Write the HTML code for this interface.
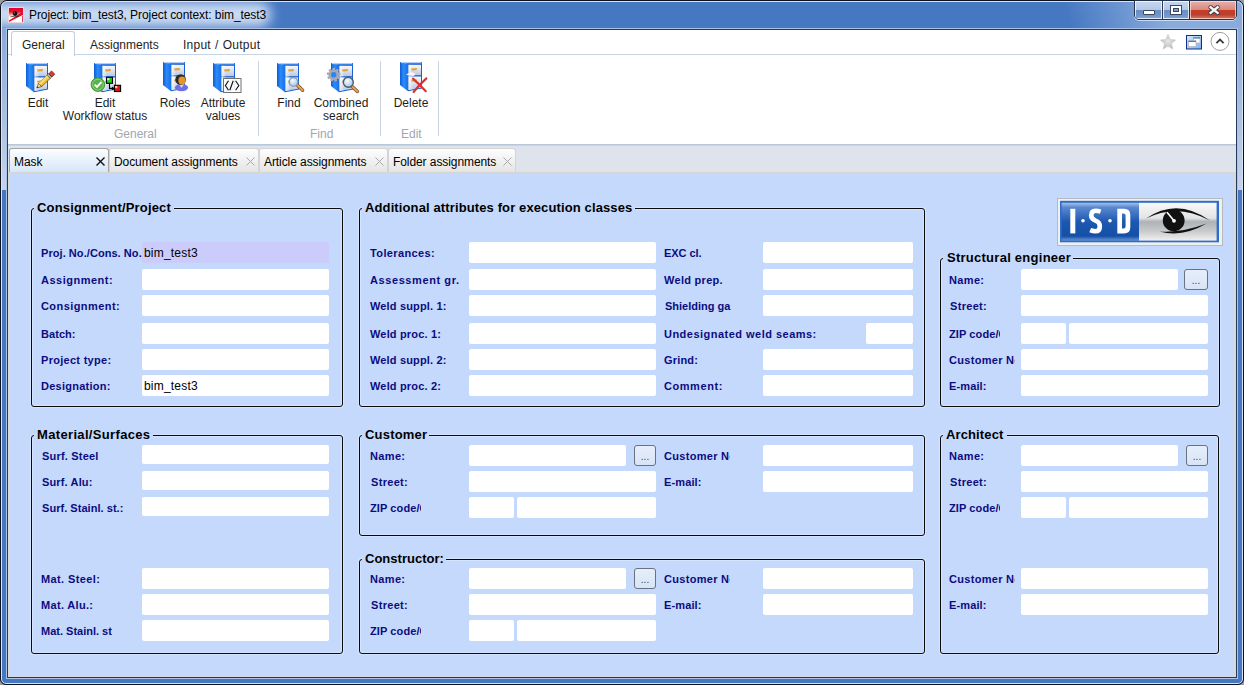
<!DOCTYPE html><html><head><meta charset="utf-8"><style>
html,body{margin:0;padding:0;width:1244px;height:685px;overflow:hidden;background:#9a9a9a;font-family:"Liberation Sans",sans-serif;position:relative}
.abs{position:absolute}
.lb{position:absolute;white-space:nowrap;color:#0c0c80;font-weight:bold;font-size:11px;line-height:11px;height:12px}
.fd{position:absolute;background:#fff;border-radius:2px;font-size:12px;color:#000;text-indent:2px;white-space:nowrap;letter-spacing:0.2px;overflow:hidden}
.bt{position:absolute;border:1px solid #6a7282;border-radius:3px;background:linear-gradient(#e6eefa,#d8e4f6);font-size:10px;color:#3a4250;text-align:center}
.gb{position:absolute;border:1px solid #0a0a0a;border-radius:3px;box-shadow:0 0 0 1px #d4e4fe, inset 0 0 0 1px #d4e4fe}
.gt{position:absolute;height:17px;line-height:17px;font-size:13px;font-weight:bold;color:#000;background:#c5d9fc;white-space:nowrap;padding-left:3px}
.rt{position:absolute;font-size:12px;color:#1e1e1e;white-space:nowrap;text-align:center;line-height:13px}
.gl{position:absolute;font-size:12px;color:#a2a6ae;white-space:nowrap;line-height:14px}
.sep{position:absolute;width:1px;top:61px;height:75px;background:#c8d4e4}
.dt{position:absolute;top:148px;height:24px;border:1px solid #d4d4d4;border-bottom:none;border-radius:3px 3px 0 0;background:linear-gradient(#fefefe,#e4e4e4);font-size:12px;color:#000;box-sizing:border-box}
.dt span{position:absolute;left:4px;top:6px;line-height:14px;white-space:nowrap;letter-spacing:-0.08px}
</style></head><body>

<div class="abs" style="left:0;top:0;width:1242px;height:683px;border:1px solid #0c121c;border-radius:7px 7px 6px 6px;background:#4678c2;overflow:hidden">
<div class="abs" style="left:-14px;top:1px;width:284px;height:25px;background:rgba(226,236,252,0.85);filter:blur(6px);border-radius:12px"></div>
<div class="abs" style="left:960px;top:0px;width:282px;height:28px;background:linear-gradient(75deg,rgba(140,174,222,0) 38%,rgba(140,174,222,0.95) 72%);"></div>
<div class="abs" style="left:1px;top:27px;width:5px;height:162px;background:linear-gradient(#8aa8d8,#c6d4ea)"></div>
<div class="abs" style="left:1236px;top:19px;width:5px;height:170px;background:linear-gradient(#8aa8d8,#c6d4ea)"></div>
<div class="abs" style="left:0;top:0;right:0;bottom:0;border:1px solid #d8e4f4;border-radius:6px 6px 5px 5px"></div>
</div>
<svg class="abs" style="left:8px;top:7px" width="16" height="16" viewBox="0 0 16 16">
<defs><linearGradient id="ai" x1="0" y1="0" x2="0" y2="1"><stop offset="0" stop-color="#e0002a"/><stop offset="0.28" stop-color="#e41030"/><stop offset="0.62" stop-color="#ffffff"/><stop offset="1" stop-color="#ffffff"/></linearGradient></defs>
<rect x="0.5" y="0.5" width="15" height="15" fill="url(#ai)" stroke="#ecd4d4" stroke-width="1"/>
<path d="M1 13.6 L15 4.6 L15 7.8 L1 15Z" fill="#e0102a"/>
<path d="M14.2 9 L15 9 L15 15 L14.2 15Z" fill="#e0102a"/>
<path d="M2.4 9.8 Q6.5 8.8 10.8 9.4" stroke="#222" stroke-width="0.7" fill="none"/>
<circle cx="7.1" cy="6.6" r="2.3" fill="#111"/><circle cx="6.4" cy="5.9" r="0.6" fill="#888"/>
</svg>
<div class="abs" style="left:29px;top:8px;font-size:12px;line-height:15px;color:#000;white-space:nowrap;letter-spacing:-0.08px">Project: bim_test3, Project context: bim_test3</div>
<div class="abs" style="left:1134px;top:0px;width:101px;height:18px;border:1px solid #243450;border-radius:0 0 5px 5px;overflow:hidden;background:#243450;box-shadow:0 1px 0 rgba(225,236,252,0.75)">
 <div class="abs" style="left:0;top:0;width:27px;height:18px;background:linear-gradient(#c6d6ee 0%,#b4c8e6 48%,#6a8ec4 50%,#7096cc 80%,#84a6d8 100%);box-shadow:inset 0 0 0 1px rgba(255,255,255,0.75)"></div>
 <div class="abs" style="left:28px;top:0;width:26px;height:18px;background:linear-gradient(#c6d6ee 0%,#b4c8e6 48%,#6a8ec4 50%,#7096cc 80%,#84a6d8 100%);box-shadow:inset 0 0 0 1px rgba(255,255,255,0.75)"></div>
 <div class="abs" style="left:55px;top:0;width:46px;height:18px;background:linear-gradient(#eab0a8 0%,#d88a80 48%,#c83c28 52%,#b8402c 75%,#d87a64 100%);box-shadow:inset 0 0 0 1px rgba(255,230,225,0.7)"></div>
 <div class="abs" style="left:27px;top:0;width:1px;height:18px;background:#2c3a52"></div>
 <div class="abs" style="left:54px;top:0;width:1px;height:18px;background:#402020"></div>
 <div class="abs" style="left:8px;top:9px;width:10px;height:3px;background:#fff;border:1px solid #3a4660;border-radius:1px"></div>
 <div class="abs" style="left:36px;top:5px;width:6px;height:4px;border:2px solid #fff;box-shadow:0 0 0 1px #3a4660, inset 0 0 0 1px #3a4660;background:#7a9ed4"></div>
 <svg class="abs" style="left:72px;top:3px" width="14" height="12" viewBox="0 0 14 12"><path d="M3.6 3.3 L10.6 8.9 M10.6 3.3 L3.6 8.9" stroke="#3a3c4c" stroke-width="4.4" stroke-linecap="round"/><path d="M3.6 3.3 L10.6 8.9 M10.6 3.3 L3.6 8.9" stroke="#f6f6f6" stroke-width="2.4" stroke-linecap="square"/></svg>
</div>
<div class="abs" style="left:6px;top:28px;width:1232px;height:651px;background:#a9c2e8"></div>
<div class="abs" style="left:7px;top:29px;width:1228px;height:647px;border:1px solid #24395c;background:#fff"></div>
<div class="abs" style="left:8px;top:54px;width:1228px;height:1px;background:#c6d4e6"></div>
<div class="abs" style="left:11px;top:31px;width:62px;height:24px;border:1px solid #c0cee0;border-bottom:none;border-radius:3px 3px 0 0;background:#fff"></div>
<div class="abs" style="left:22px;top:38px;font-size:12px;line-height:15px;color:#1e1e1e">General</div>
<div class="abs" style="left:90px;top:38px;font-size:12px;line-height:15px;color:#1e1e1e">Assignments</div>
<div class="abs" style="left:183px;top:38px;font-size:12px;line-height:15px;color:#1e1e1e;word-spacing:0.5px;letter-spacing:0.25px">Input / Output</div>
<svg class="abs" style="left:1159px;top:33px" width="18" height="18" viewBox="0 0 18 18"><defs><radialGradient id="sg" cx="0.5" cy="0.45" r="0.6"><stop offset="0" stop-color="#e6e6e6"/><stop offset="1" stop-color="#b8b8b8"/></radialGradient></defs>
<path d="M9 1.5 L11.2 6.6 L16.6 7 L12.5 10.6 L13.8 16 L9 13.1 L4.2 16 L5.5 10.6 L1.4 7 L6.8 6.6Z" fill="url(#sg)" stroke="#c4c4c4" stroke-width="0.6"/></svg>
<svg class="abs" style="left:1186px;top:35px" width="16" height="15" viewBox="0 0 16 15">
<defs><linearGradient id="wig" x1="0" y1="0" x2="1" y2="1"><stop offset="0" stop-color="#d8e8fc"/><stop offset="1" stop-color="#80aef0"/></linearGradient></defs>
<rect x="0.5" y="0.5" width="15" height="13.5" fill="url(#wig)" stroke="#0b2f8a"/>
<rect x="7.5" y="2.5" width="6.5" height="5.5" fill="#fff" stroke="#a8b0bc" stroke-width="0.7"/><rect x="7.5" y="2.5" width="6.5" height="1" fill="#1a6a80"/>
<rect x="2.5" y="5.8" width="7.5" height="5.8" fill="#fff" stroke="#a8b0bc" stroke-width="0.7"/><rect x="2.5" y="5.8" width="7.5" height="1" fill="#1a6a80"/>
</svg>
<svg class="abs" style="left:1210px;top:32px" width="20" height="20" viewBox="0 0 20 20">
<circle cx="10" cy="9.4" r="9" fill="#fff" stroke="#a0a0a0" stroke-width="1"/>
<path d="M6.4 11.2 L10 7.6 L13.6 11.2" fill="none" stroke="#3c3c3c" stroke-width="1.8"/></svg>
<svg width="0" height="0" style="position:absolute"><defs>
<linearGradient id="cbS" x1="0" y1="0" x2="1" y2="0"><stop offset="0" stop-color="#0f5ad8"/><stop offset="0.45" stop-color="#2a8cf6"/><stop offset="1" stop-color="#1a70ea"/></linearGradient>
<linearGradient id="cbF" x1="0" y1="0" x2="0" y2="1"><stop offset="0" stop-color="#f6f8fc"/><stop offset="1" stop-color="#bcc8e0"/></linearGradient>
<linearGradient id="cbL" x1="0" y1="0" x2="1" y2="0"><stop offset="0" stop-color="#ffffff" stop-opacity="0.7"/><stop offset="0.4" stop-color="#ffffff" stop-opacity="0"/></linearGradient>
<radialGradient id="lens" cx="0.4" cy="0.35" r="0.7"><stop offset="0" stop-color="#f4fbff"/><stop offset="1" stop-color="#9cc8e8"/></radialGradient>
<symbol id="cab" viewBox="0 0 24 30">
 <path d="M0 0 L8 2 L8 29.2 L0 23Z" fill="url(#cbS)"/>
 <path d="M0 0 L22 0 L22 2.2 L8 2.2Z" fill="#2c7ae6"/>
 <path d="M1 0.6 L21 0.6" stroke="#cfe2fb" stroke-width="0.9"/>
 <path d="M8 2 L22 2 L22 26.6 L8 29.2Z" fill="#1c5fd0"/>
 <path d="M8.5 2.8 L21 2.8 L21 13.2 L8.5 13.2Z" fill="url(#cbF)"/>
 <path d="M8.5 14.4 L21 14.4 L21 25.8 L8.5 28Z" fill="url(#cbF)"/>
 <path d="M8.5 2.8 L21 2.8 L21 28 L8.5 28Z" fill="url(#cbL)"/>
 <path d="M11 6.4 L17 6 L16.6 8.2 L11.6 8.4Z" fill="#e2a23a"/>
 <path d="M11 17.8 L17 17.4 L16.6 19.6 L11.6 19.8Z" fill="#e2a23a"/>
</symbol>
</defs></svg>
<svg class="abs" style="left:18px;top:56px" width="44" height="40" viewBox="18 56 44 40"><use href="#cab" x="26" y="63" width="24" height="30"/><path d="M36.80 88.00 L41.62 86.56 L38.54 83.28Z" fill="#f4dc9c" stroke="#3a3020" stroke-width="0.6"/><path d="M36.80 88.00 L38.51 87.48 L37.43 86.33Z" fill="#222" /><path d="M41.62 86.56 L50.37 78.35 L47.29 75.07 L38.54 83.28Z" fill="#f2c232" stroke="#5a4010" stroke-width="0.7"/><path d="M40.23 85.08 L48.98 76.87 L47.29 75.07 L38.54 83.28Z" fill="#f8dc70" /><path d="M50.37 78.35 L51.82 76.98 L48.74 73.70 L47.29 75.07Z" fill="#b8b8b8" stroke="#505050" stroke-width="0.6"/><path d="M51.82 76.98 L54.74 74.24 L51.66 70.96 L48.74 73.70Z" fill="#d83a3a" stroke="#4a1a1a" stroke-width="0.7"/></svg>
<svg class="abs" style="left:86px;top:56px" width="44" height="40" viewBox="86 56 44 40"><use href="#cab" x="94" y="63" width="24" height="30"/><circle cx="97.9" cy="84.6" r="6.8" fill="#5cb04e" stroke="#3c9a30" stroke-width="1"/><circle cx="97.9" cy="84.6" r="5.4" fill="none" stroke="#9ad48c" stroke-width="0.8"/><path d="M94.6 84.6 L97 87 L101.4 82.2" stroke="#fff" stroke-width="1.9" fill="none"/><path d="M109.5 83 L109.5 88.4 L113.6 88.4" stroke="#000" stroke-width="1.1" fill="none"/><path d="M112 86.4 L114.6 88.4 L112 90.4Z" fill="#000"/><rect x="106.5" y="77.3" width="6" height="6" fill="#18d018" stroke="#000" stroke-width="1.1"/><rect x="107.2" y="78" width="2.2" height="2.2" fill="#c8f8c8"/><rect x="114.4" y="85.3" width="6.2" height="6.2" fill="#e81010" stroke="#000" stroke-width="1.1"/><rect x="115.1" y="86" width="2.2" height="2.2" fill="#f8c8c8"/></svg>
<svg class="abs" style="left:155px;top:56px" width="44" height="40" viewBox="155 56 44 40"><use href="#cab" x="163" y="62" width="24" height="30"/><ellipse cx="181.5" cy="87.6" rx="6.6" ry="3.6" fill="#6e6ee6"/><path d="M179 84.5 L181.5 88 L184 84.5Z" fill="#b8d8f8"/><circle cx="180.6" cy="79.6" r="5.3" fill="#2a2a2a"/><ellipse cx="182" cy="80.6" rx="3.6" ry="4.2" fill="#e8942c"/></svg>
<svg class="abs" style="left:205px;top:56px" width="44" height="40" viewBox="205 56 44 40"><use href="#cab" x="213" y="63" width="24" height="30"/><rect x="223.5" y="78.5" width="17.5" height="14" fill="#ffffff" fill-opacity="0.88" stroke="#707070" stroke-width="1"/><path d="M228.5 80.8 L225.4 85.5 L228.5 90.2 M233.2 80.8 L229.8 90.2 M235.6 80.8 L238.8 85.5 L235.6 90.2" stroke="#111" stroke-width="1.15" fill="none"/></svg>
<svg class="abs" style="left:269px;top:56px" width="44" height="40" viewBox="269 56 44 40"><use href="#cab" x="277" y="63" width="24" height="30"/><path d="M297.2 85 L302.6 90.2" stroke="#6a5040" stroke-width="3.4" stroke-linecap="round"/><path d="M297.2 85 L302.6 90.2" stroke="#f0a040" stroke-width="2" stroke-linecap="round"/><circle cx="293.5" cy="81.9" r="4.3" fill="url(#lens)" stroke="#8a98aa" stroke-width="1.3"/></svg>
<svg class="abs" style="left:323px;top:56px" width="44" height="40" viewBox="323 56 44 40"><use href="#cab" x="331" y="63" width="24" height="30"/><g transform="translate(333.7 74.7)"><rect x="-1.3" y="-6.8" width="2.6" height="3" fill="#a8a8b8" transform="rotate(0)"/><rect x="-1.3" y="-6.8" width="2.6" height="3" fill="#a8a8b8" transform="rotate(40)"/><rect x="-1.3" y="-6.8" width="2.6" height="3" fill="#a8a8b8" transform="rotate(80)"/><rect x="-1.3" y="-6.8" width="2.6" height="3" fill="#a8a8b8" transform="rotate(120)"/><rect x="-1.3" y="-6.8" width="2.6" height="3" fill="#a8a8b8" transform="rotate(160)"/><rect x="-1.3" y="-6.8" width="2.6" height="3" fill="#a8a8b8" transform="rotate(200)"/><rect x="-1.3" y="-6.8" width="2.6" height="3" fill="#a8a8b8" transform="rotate(240)"/><rect x="-1.3" y="-6.8" width="2.6" height="3" fill="#a8a8b8" transform="rotate(280)"/><rect x="-1.3" y="-6.8" width="2.6" height="3" fill="#a8a8b8" transform="rotate(320)"/><circle r="5.2" fill="#a8a8b8"/><circle r="2.8" fill="#2a88f0"/></g><path d="M351.6 86 L357.4 91.4" stroke="#6a5040" stroke-width="3.4" stroke-linecap="round"/><path d="M351.6 86 L357.4 91.4" stroke="#f0a040" stroke-width="2" stroke-linecap="round"/><circle cx="348.3" cy="82.3" r="5" fill="url(#lens)" stroke="#505a68" stroke-width="1.4"/></svg>
<svg class="abs" style="left:392px;top:56px" width="44" height="40" viewBox="392 56 44 40"><use href="#cab" x="400" y="62" width="24" height="30"/><path d="M406.3 74.7 L410.9 71.5 L416.2 73.5 L413.3 76.3Z" fill="#f4f8fc" stroke="#b8c8e0" stroke-width="0.5"/><path d="M413 78.6 Q419 84 425.8 91.2 M426.4 78.4 Q419 85 413.6 92" stroke="#dc3030" stroke-width="2.1" fill="none" stroke-linecap="round"/></svg>
<div class="rt" style="left:-22px;top:97px;width:120px">Edit</div>
<div class="rt" style="left:45px;top:97px;width:120px">Edit<br>Workflow status</div>
<div class="rt" style="left:115px;top:97px;width:120px">Roles</div>
<div class="rt" style="left:163px;top:97px;width:120px">Attribute<br>values</div>
<div class="rt" style="left:229px;top:97px;width:120px">Find</div>
<div class="rt" style="left:281px;top:97px;width:120px">Combined<br>search</div>
<div class="rt" style="left:351px;top:97px;width:120px">Delete</div>
<div class="gl" style="left:114px;top:127px">General</div>
<div class="gl" style="left:310px;top:127px">Find</div>
<div class="gl" style="left:401px;top:127px">Edit</div>
<div class="sep" style="left:258px"></div>
<div class="sep" style="left:380px"></div>
<div class="sep" style="left:438px"></div>
<div class="abs" style="left:8px;top:144px;width:1228px;height:1px;background:#b8c8da"></div>
<div class="abs" style="left:8px;top:145px;width:1228px;height:28px;background:#dfe3ec"></div>
<div class="abs" style="left:8px;top:145px;width:1228px;height:1px;background:#cdd3dc"></div>
<div class="dt" style="left:9px;width:100px;border-color:#a4a4a4;background:linear-gradient(#fbfdff,#d6e6f8)"><span style="left:4px">Mask</span><svg class="abs" style="left:86px;top:8px" width="9" height="9" viewBox="0 0 9 9"><path d="M0.5 0.5 L8.5 8.5 M8.5 0.5 L0.5 8.5" stroke="#111" stroke-width="1.4"/></svg></div>
<div class="dt" style="left:109px;width:150px"><span>Document assignments</span><svg class="abs" style="left:136px;top:8px" width="9" height="9" viewBox="0 0 9 9"><path d="M0.5 0.5 L8.5 8.5 M8.5 0.5 L0.5 8.5" stroke="#a8a8a8" stroke-width="1"/></svg></div>
<div class="dt" style="left:259px;width:129px"><span>Article assignments</span><svg class="abs" style="left:115px;top:8px" width="9" height="9" viewBox="0 0 9 9"><path d="M0.5 0.5 L8.5 8.5 M8.5 0.5 L0.5 8.5" stroke="#a8a8a8" stroke-width="1"/></svg></div>
<div class="dt" style="left:388px;width:128px"><span>Folder assignments</span><svg class="abs" style="left:114px;top:8px" width="9" height="9" viewBox="0 0 9 9"><path d="M0.5 0.5 L8.5 8.5 M8.5 0.5 L0.5 8.5" stroke="#a8a8a8" stroke-width="1"/></svg></div>
<div class="abs" style="left:8px;top:172px;width:1228px;height:505px;background:#d8d8d8"></div>
<div class="abs" style="left:8px;top:172px;width:1228px;height:1px;background:#d4d4d4"></div>
<div class="abs" style="left:10px;top:173px;width:1224px;height:502px;background:#c5d9fc"></div>
<div class="gb" style="left:31px;top:208px;width:310px;height:197px;"></div>
<div class="gt" style="left:34px;top:199px;width:137px;padding-left:3px;letter-spacing:0.17px">Consignment/Project</div>
<div class="lb" style="left:41px;top:248px;letter-spacing:0.06px">Proj. No./Cons. No.</div>
<div class="fd" style="left:142px;top:242px;width:187px;height:21px;line-height:23px;background:#ccccfc;">bim_test3</div>
<div class="lb" style="left:41px;top:275px;letter-spacing:0.50px">Assignment:</div>
<div class="fd" style="left:142px;top:269px;width:187px;height:21px;line-height:23px;"></div>
<div class="lb" style="left:41px;top:301px;letter-spacing:0.43px">Consignment:</div>
<div class="fd" style="left:142px;top:295px;width:187px;height:21px;line-height:23px;"></div>
<div class="lb" style="left:41px;top:329px;letter-spacing:0.06px">Batch:</div>
<div class="fd" style="left:142px;top:323px;width:187px;height:21px;line-height:23px;"></div>
<div class="lb" style="left:41px;top:355px;letter-spacing:0.29px">Project type:</div>
<div class="fd" style="left:142px;top:349px;width:187px;height:21px;line-height:23px;"></div>
<div class="lb" style="left:41px;top:381px;letter-spacing:0.26px">Designation:</div>
<div class="fd" style="left:142px;top:375px;width:187px;height:21px;line-height:23px;">bim_test3</div>
<div class="gb" style="left:359px;top:208px;width:564px;height:197px;"></div>
<div class="gt" style="left:362px;top:199px;width:270px;padding-left:3px;letter-spacing:0.12px">Additional attributes for execution classes</div>
<div class="lb" style="left:370px;top:248px;letter-spacing:0.38px">Tolerances:</div>
<div class="fd" style="left:469px;top:242px;width:187px;height:21px;line-height:23px;"></div>
<div class="lb" style="left:664px;top:248px;letter-spacing:-0.05px">EXC cl.</div>
<div class="fd" style="left:763px;top:242px;width:150px;height:21px;line-height:23px;"></div>
<div class="lb" style="left:370px;top:275px;letter-spacing:0.59px">Assessment gr.</div>
<div class="fd" style="left:469px;top:269px;width:187px;height:21px;line-height:23px;"></div>
<div class="lb" style="left:664px;top:275px;letter-spacing:0.29px">Weld prep.</div>
<div class="fd" style="left:763px;top:269px;width:150px;height:21px;line-height:23px;"></div>
<div class="lb" style="left:370px;top:301px;letter-spacing:0.15px">Weld suppl. 1:</div>
<div class="fd" style="left:469px;top:295px;width:187px;height:21px;line-height:23px;"></div>
<div class="lb" style="left:665px;top:301px;letter-spacing:-0.01px">Shielding ga</div>
<div class="fd" style="left:763px;top:295px;width:150px;height:21px;line-height:23px;"></div>
<div class="lb" style="left:370px;top:329px;letter-spacing:0.17px">Weld proc. 1:</div>
<div class="fd" style="left:469px;top:323px;width:187px;height:21px;line-height:23px;"></div>
<div class="lb" style="left:664px;top:329px;letter-spacing:0.48px">Undesignated weld seams:</div>
<div class="fd" style="left:866px;top:323px;width:47px;height:21px;line-height:23px;"></div>
<div class="lb" style="left:370px;top:355px;letter-spacing:0.15px">Weld suppl. 2:</div>
<div class="fd" style="left:469px;top:349px;width:187px;height:21px;line-height:23px;"></div>
<div class="lb" style="left:664px;top:355px;letter-spacing:0.18px">Grind:</div>
<div class="fd" style="left:763px;top:349px;width:150px;height:21px;line-height:23px;"></div>
<div class="lb" style="left:370px;top:381px;letter-spacing:0.17px">Weld proc. 2:</div>
<div class="fd" style="left:469px;top:375px;width:187px;height:21px;line-height:23px;"></div>
<div class="lb" style="left:664px;top:381px;letter-spacing:0.56px">Comment:</div>
<div class="fd" style="left:763px;top:375px;width:150px;height:21px;line-height:23px;"></div>
<svg class="abs" style="left:1057px;top:198px" width="166" height="48" viewBox="0 0 166 48">
<defs><linearGradient id="lb" x1="0" y1="0" x2="0" y2="1"><stop offset="0" stop-color="#a8c0e6"/><stop offset="0.12" stop-color="#5a88d0"/><stop offset="0.5" stop-color="#1d58b0"/><stop offset="0.88" stop-color="#1450a8"/><stop offset="1" stop-color="#6a92d0"/></linearGradient>
<linearGradient id="lg" x1="0" y1="0" x2="0" y2="1"><stop offset="0" stop-color="#f8f8f8"/><stop offset="0.4" stop-color="#e4e4e4"/><stop offset="0.5" stop-color="#aeb2b6"/><stop offset="0.75" stop-color="#c8cacc"/><stop offset="1" stop-color="#f0f0f0"/></linearGradient></defs>
<rect x="0.5" y="0.5" width="165" height="47" fill="#eef0f2" stroke="#b4bac0"/>
<rect x="3" y="2.8" width="159" height="41.5" fill="#2f6ec6"/>
<rect x="4.6" y="4.8" width="77.4" height="37.8" fill="url(#lb)"/>
<rect x="82" y="4.8" width="77.6" height="37.8" fill="url(#lg)"/>
<g fill="#fff"><rect x="13.3" y="10.8" width="5" height="24.6"/><circle cx="26" cy="22.8" r="1.8"/><circle cx="53" cy="22.8" r="1.8"/>
<path d="M60.3 10.8 L67 10.8 Q73.3 10.8 73.3 17 L73.3 29.2 Q73.3 35.4 67 35.4 L60.3 35.4Z M65 15.6 L65 30.6 L66.6 30.6 Q68.6 30.6 68.6 28.6 L68.6 17.6 Q68.6 15.6 66.6 15.6Z" fill-rule="evenodd"/></g>
<path d="M43.6 13.6 Q41 12.8 38.6 12.8 Q34.2 12.8 34.2 17.6 Q34.2 21 38.6 22.6 Q42.8 24 42.8 28.4 Q42.8 33.2 38.4 33.2 Q35.6 33.2 33.2 32.2" stroke="#fff" stroke-width="4.6" fill="none"/>
<path d="M89 20.6 Q120 -1 153 22.6 Q120 5 89 20.6Z" fill="#111"/>
<path d="M102.5 33.4 Q125 40 149.6 25.6 Q125 35 102.5 33.4Z" fill="#111"/>
<circle cx="116.7" cy="22.4" r="10.9" fill="#111"/>
<path d="M116.8 22.6 L110 14.2" stroke="#fff" stroke-width="1.6"/><circle cx="117" cy="22.8" r="1.9" fill="#fff"/>
</svg>
<div class="gb" style="left:940px;top:258px;width:278px;height:147px;"></div>
<div class="gt" style="left:943px;top:249px;width:126px;padding-left:4px;letter-spacing:0.26px">Structural engineer</div>
<div class="lb" style="left:949px;top:275px;letter-spacing:0.35px">Name:</div>
<div class="fd" style="left:1021px;top:269px;width:157px;height:21px;line-height:23px;"></div>
<div class="bt" style="left:1184px;top:269px;width:22px;height:19px;line-height:22px;">...</div>
<div class="lb" style="left:950px;top:301px;letter-spacing:0.32px">Street:</div>
<div class="fd" style="left:1021px;top:295px;width:187px;height:21px;line-height:23px;"></div>
<div class="lb" style="left:949px;top:329px;width:51px;overflow:hidden;letter-spacing:0.1px">ZIP code/City</div>
<div class="fd" style="left:1021px;top:323px;width:45px;height:21px;line-height:23px;"></div>
<div class="fd" style="left:1069px;top:323px;width:139px;height:21px;line-height:23px;"></div>
<div class="lb" style="left:949px;top:355px;width:66px;overflow:hidden;letter-spacing:0.3px">Customer No.:</div>
<div class="fd" style="left:1021px;top:349px;width:187px;height:21px;line-height:23px;"></div>
<div class="lb" style="left:949px;top:381px;letter-spacing:0.13px">E-mail:</div>
<div class="fd" style="left:1021px;top:375px;width:187px;height:21px;line-height:23px;"></div>
<div class="gb" style="left:31px;top:435px;width:310px;height:217px;"></div>
<div class="gt" style="left:34px;top:426px;width:116px;padding-left:3px;letter-spacing:0.34px">Material/Surfaces</div>
<div class="lb" style="left:42px;top:451px;letter-spacing:0.19px">Surf. Steel</div>
<div class="fd" style="left:142px;top:445px;width:187px;height:19px;line-height:21px;"></div>
<div class="lb" style="left:42px;top:477px;letter-spacing:0.14px">Surf. Alu:</div>
<div class="fd" style="left:142px;top:471px;width:187px;height:19px;line-height:21px;"></div>
<div class="lb" style="left:42px;top:503px;letter-spacing:0.04px">Surf. Stainl. st.:</div>
<div class="fd" style="left:142px;top:497px;width:187px;height:19px;line-height:21px;"></div>
<div class="lb" style="left:41px;top:574px;letter-spacing:0.38px">Mat. Steel:</div>
<div class="fd" style="left:142px;top:568px;width:187px;height:21px;line-height:23px;"></div>
<div class="lb" style="left:41px;top:600px;letter-spacing:0.32px">Mat. Alu.:</div>
<div class="fd" style="left:142px;top:594px;width:187px;height:21px;line-height:23px;"></div>
<div class="lb" style="left:41px;top:626px;width:71px;overflow:hidden;letter-spacing:0px">Mat. Stainl. st.:</div>
<div class="fd" style="left:142px;top:620px;width:187px;height:21px;line-height:23px;"></div>
<div class="gb" style="left:359px;top:435px;width:564px;height:99px;"></div>
<div class="gt" style="left:362px;top:426px;width:64px;padding-left:3px;letter-spacing:0.2px">Customer</div>
<div class="lb" style="left:370px;top:451px;letter-spacing:0.35px">Name:</div>
<div class="fd" style="left:469px;top:445px;width:157px;height:21px;line-height:23px;"></div>
<div class="bt" style="left:634px;top:445px;width:20px;height:19px;line-height:22px;">...</div>
<div class="lb" style="left:371px;top:477px;letter-spacing:0.32px">Street:</div>
<div class="fd" style="left:469px;top:471px;width:187px;height:21px;line-height:23px;"></div>
<div class="lb" style="left:370px;top:503px;width:51px;overflow:hidden;letter-spacing:0.1px">ZIP code/City</div>
<div class="fd" style="left:469px;top:497px;width:45px;height:21px;line-height:23px;"></div>
<div class="fd" style="left:517px;top:497px;width:139px;height:21px;line-height:23px;"></div>
<div class="lb" style="left:664px;top:451px;width:66px;overflow:hidden;letter-spacing:0.3px">Customer No.:</div>
<div class="fd" style="left:763px;top:445px;width:150px;height:21px;line-height:23px;"></div>
<div class="lb" style="left:664px;top:477px;letter-spacing:0.13px">E-mail:</div>
<div class="fd" style="left:763px;top:471px;width:150px;height:21px;line-height:23px;"></div>
<div class="gb" style="left:359px;top:559px;width:564px;height:93px;"></div>
<div class="gt" style="left:362px;top:550px;width:81px;padding-left:3px;letter-spacing:0.02px">Constructor:</div>
<div class="lb" style="left:370px;top:574px;letter-spacing:0.35px">Name:</div>
<div class="fd" style="left:469px;top:568px;width:157px;height:21px;line-height:23px;"></div>
<div class="bt" style="left:634px;top:568px;width:20px;height:19px;line-height:22px;">...</div>
<div class="lb" style="left:371px;top:600px;letter-spacing:0.32px">Street:</div>
<div class="fd" style="left:469px;top:594px;width:187px;height:21px;line-height:23px;"></div>
<div class="lb" style="left:370px;top:626px;width:51px;overflow:hidden;letter-spacing:0.1px">ZIP code/City</div>
<div class="fd" style="left:469px;top:620px;width:45px;height:21px;line-height:23px;"></div>
<div class="fd" style="left:517px;top:620px;width:139px;height:21px;line-height:23px;"></div>
<div class="lb" style="left:664px;top:574px;width:66px;overflow:hidden;letter-spacing:0.3px">Customer No.:</div>
<div class="fd" style="left:763px;top:568px;width:150px;height:21px;line-height:23px;"></div>
<div class="lb" style="left:664px;top:600px;letter-spacing:0.13px">E-mail:</div>
<div class="fd" style="left:763px;top:594px;width:150px;height:21px;line-height:23px;"></div>
<div class="gb" style="left:940px;top:435px;width:277px;height:217px;"></div>
<div class="gt" style="left:943px;top:426px;width:61px;padding-left:3px;letter-spacing:0.12px">Architect</div>
<div class="lb" style="left:949px;top:451px;letter-spacing:0.35px">Name:</div>
<div class="fd" style="left:1021px;top:445px;width:157px;height:21px;line-height:23px;"></div>
<div class="bt" style="left:1186px;top:445px;width:20px;height:19px;line-height:22px;">...</div>
<div class="lb" style="left:950px;top:477px;letter-spacing:0.32px">Street:</div>
<div class="fd" style="left:1021px;top:471px;width:187px;height:21px;line-height:23px;"></div>
<div class="lb" style="left:949px;top:503px;width:51px;overflow:hidden;letter-spacing:0.1px">ZIP code/City</div>
<div class="fd" style="left:1021px;top:497px;width:45px;height:21px;line-height:23px;"></div>
<div class="fd" style="left:1069px;top:497px;width:139px;height:21px;line-height:23px;"></div>
<div class="lb" style="left:949px;top:574px;width:66px;overflow:hidden;letter-spacing:0.3px">Customer No.:</div>
<div class="fd" style="left:1021px;top:568px;width:187px;height:21px;line-height:23px;"></div>
<div class="lb" style="left:949px;top:600px;letter-spacing:0.13px">E-mail:</div>
<div class="fd" style="left:1021px;top:594px;width:187px;height:21px;line-height:23px;"></div>
</body></html>
